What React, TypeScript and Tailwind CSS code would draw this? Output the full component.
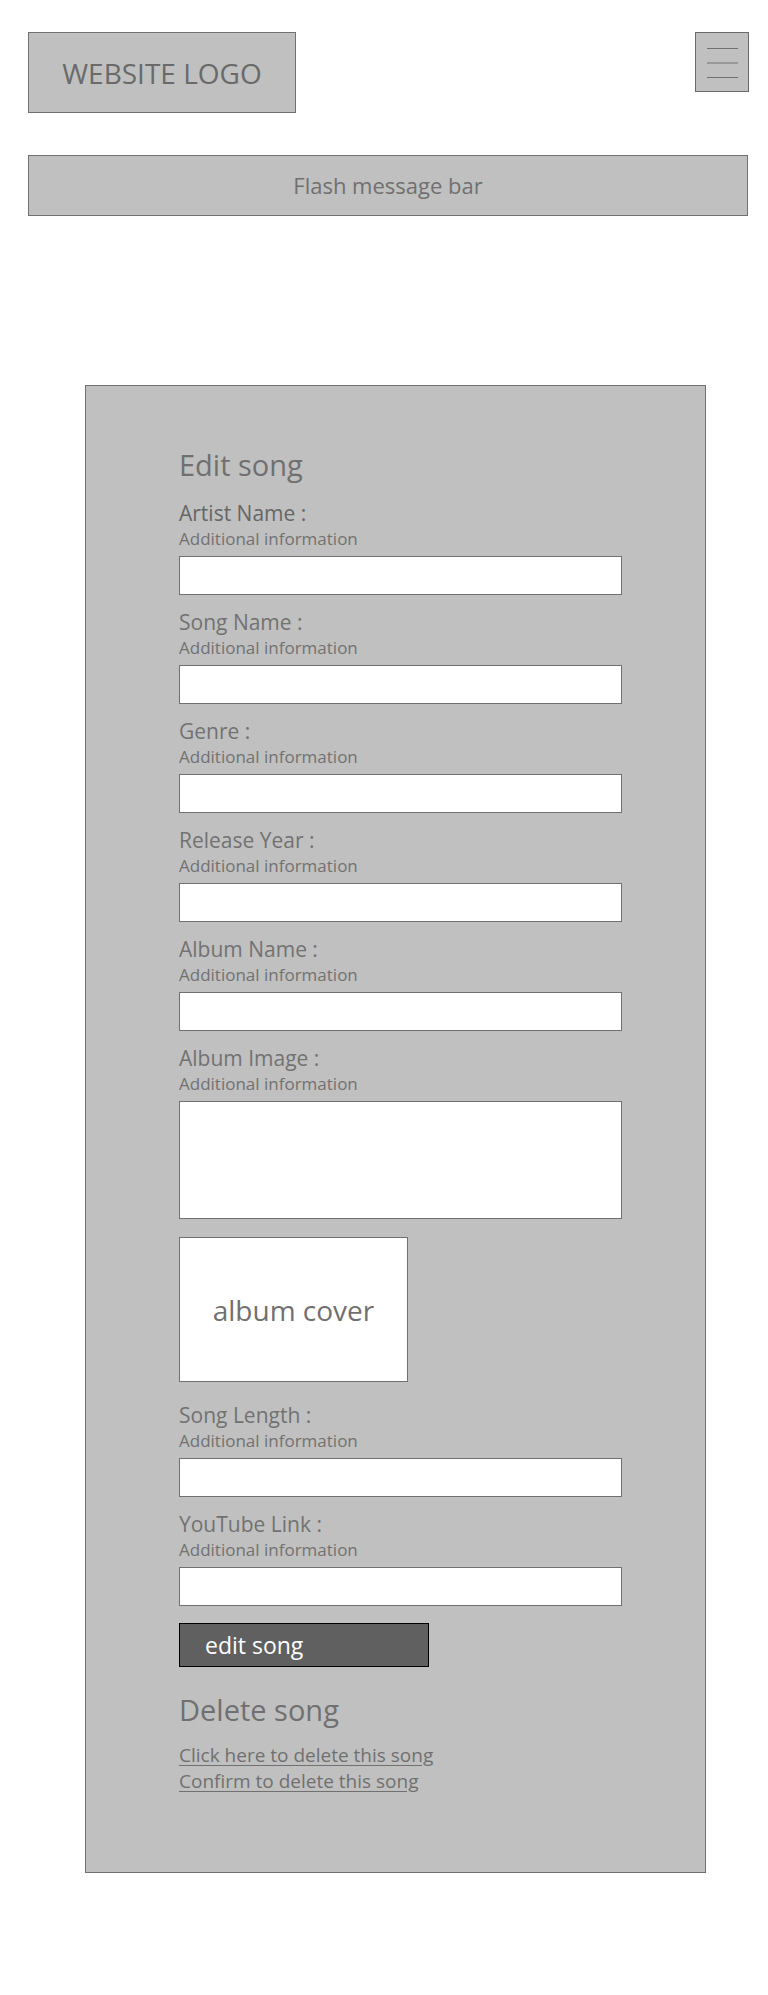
import React from "react";

const font = { fontFamily: '"Open Sans", "Noto Sans", sans-serif' };

function Field({ label, dark = false, tall = false }: { label: string; dark?: boolean; tall?: boolean }) {
  return (
    <div className="flex flex-col">
      <div className={`text-[21px] leading-[28px] ${dark ? "text-[#666666]" : "text-[#727272]"}`}>{label}</div>
      <div className="text-[17px] leading-[24px] text-[#727272]">Additional information</div>
      <div className={`mt-[5px] w-[443px] ${tall ? "h-[118px]" : "h-[39px]"} border border-[#707070] bg-white`} />
    </div>
  );
}

export default function App() {
  return (
    <div className="min-h-[1995px] w-[768px] bg-white" style={font}>
      <div className="flex items-start justify-between pl-[28px] pr-[19px] pt-[32px]">
        <div className="flex h-[81px] w-[268px] items-center justify-center border border-[#707070] bg-[#c0c0c0] text-[28px] text-[#6a6a6a]">
          WEBSITE LOGO
        </div>
        <div className="flex h-[60px] w-[54px] flex-col items-center border border-[#6a6a6a] bg-[#c0c0c0] pt-[15px]">
          <div className="h-px w-[31px] bg-[#707070]" />
          <div className="mt-[13px] h-[2px] w-[31px] bg-[#999999]" />
          <div className="mt-[13px] h-px w-[31px] bg-[#707070]" />
        </div>
      </div>
      <div className="ml-[28px] mr-[20px] mt-[42px] flex h-[61px] items-center justify-center border border-[#707070] bg-[#c0c0c0] text-[22px] text-[#707070]">
        Flash message bar
      </div>
      <div className="ml-[85px] mt-[169px] w-[621px] border border-[#707070] bg-[#c0c0c0] pb-[78px] pl-[93px] pt-[59px]">
        <div className="text-[29px] leading-[40px] text-[#707070]">Edit song</div>
        <div className="mt-[14px] flex flex-col gap-[13px]">
          <Field label="Artist Name :" dark />
          <Field label="Song Name :" />
          <Field label="Genre :" />
          <Field label="Release Year :" />
          <Field label="Album Name :" />
          <Field label="Album Image :" tall />
        </div>
        <div className="mt-[18px] flex h-[145px] w-[229px] items-center justify-center border border-[#707070] bg-white text-[28px] text-[#707070]">
          album cover
        </div>
        <div className="mt-[19px] flex flex-col gap-[13px]">
          <Field label="Song Length :" />
          <Field label="YouTube Link :" />
        </div>
        <button className="mt-[17px] flex h-[44px] w-[250px] items-center border border-black bg-[#606060] pl-[25px] text-[23px] text-white">
          edit song
        </button>
        <div className="mt-[23px] text-[29px] leading-[40px] text-[#707070]">Delete song</div>
        <div className="mt-[12px] flex flex-col text-[19px] leading-[26px] text-[#707070]">
          <a className="w-fit underline underline-offset-[3px]">Click here to delete this song</a>
          <a className="w-fit underline underline-offset-[3px]">Confirm to delete this song</a>
        </div>
      </div>
    </div>
  );
}
